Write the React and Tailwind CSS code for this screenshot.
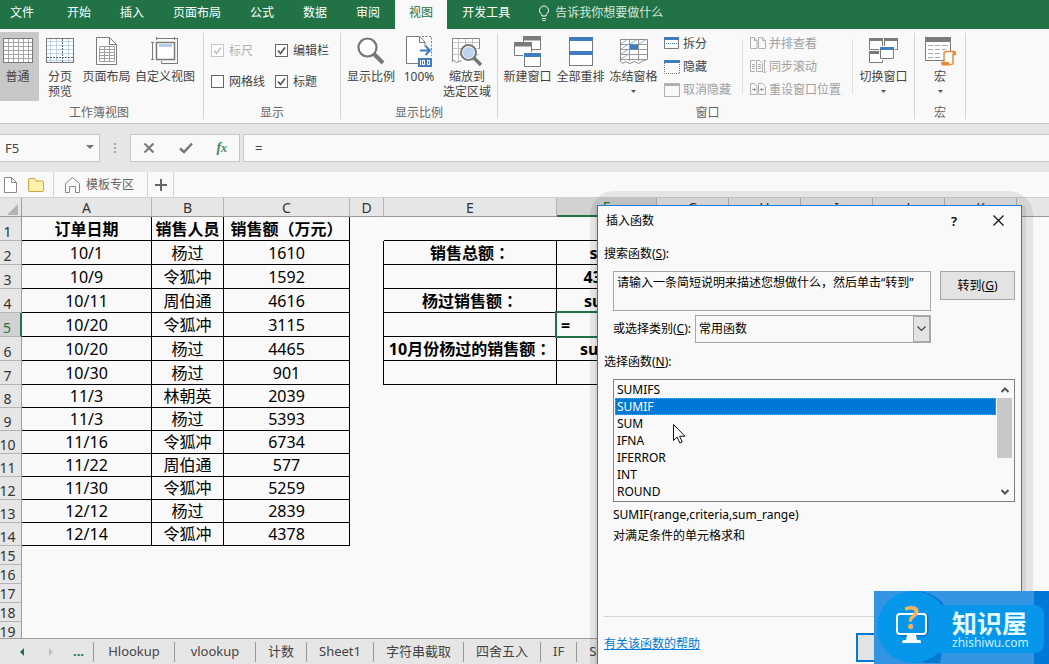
import { useState } from 'react';
import clsx from 'clsx';

const tabs = ['开始', '插入', '页面布局', '公式', '数据', '审阅', '视图', '开发工具'];

const orders = [
  ['10/1', '杨过', '1610'],
  ['10/9', '令狐冲', '1592'],
  ['10/11', '周伯通', '4616'],
  ['10/20', '令狐冲', '3115'],
  ['10/20', '杨过', '4465'],
  ['10/30', '杨过', '901'],
  ['11/3', '林朝英', '2039'],
  ['11/3', '杨过', '5393'],
  ['11/16', '令狐冲', '6734'],
  ['11/22', '周伯通', '577'],
  ['11/30', '令狐冲', '5259'],
  ['12/12', '杨过', '2839'],
  ['12/14', '令狐冲', '4378'],
];

// summary block in E:F, keyed by row number
const summary = {
  2: ['销售总额', 'sum'],
  3: ['', '43518'],
  4: ['杨过销售额', 'sumif'],
  5: ['', '='],
  6: ['10月份杨过的销售额', 'sumifs'],
  7: ['', ''],
};

const columns = ['A', 'B', 'C', 'D', 'E', 'F', 'G', 'H', 'I', 'J', 'K', 'L'];
const functions = ['SUMIFS', 'SUMIF', 'SUM', 'IFNA', 'IFERROR', 'INT', 'ROUND'];
const sheets = ['Hlookup', 'vlookup', '计数', 'Sheet1', '字符串截取', '四舍五入', 'IF', 'Sheet2'];

/* ---------- icons ---------- */

const GridIcon = () => (
  <svg width="30" height="26" viewBox="0 0 30 26" fill="none">
    <rect x=".5" y=".5" width="29" height="24" fill="#fff" stroke="#7a7a7a" />
    <path d="M5.5 1v23M10.5 1v23M15.5 1v23M20.5 1v23M25.5 1v23M1 4.5h28M1 8.5h28M1 12.5h28M1 16.5h28M1 20.5h28" stroke="#a6a6a6" />
  </svg>
);

const PageBreakIcon = () => (
  <svg width="28" height="26" viewBox="0 0 28 26" fill="none">
    <rect x=".5" y=".5" width="27" height="24" fill="#fff" stroke="#7a7a7a" />
    <path d="M4.500 1v23M10.500 1v23M22.500 1v23M1 3.500h26M1 7.500h26M1 11.500h26M1 15.500h26M1 22.500h26" stroke="#b9d3ee" />
    <path d="M16.500 1v23M1 19.500h26" stroke="#5a6b7c" strokeDasharray="2 1" />
  </svg>
);

const PageLayoutIcon = () => (
  <svg width="22" height="28" viewBox="0 0 22 28" fill="none">
    <path d="M.5.5h13l7 7v20H.5z" fill="#fff" stroke="#7a7a7a" />
    <path d="M13.500.5v7h7" stroke="#7a7a7a" />
    <path d="M3.500 9.500h15v15h-15zM3.500 12.500h15M3.500 15.500h15M3.500 18.500h15M3.500 21.500h15M8.500 9.500v15M13.500 9.500v15" stroke="#a0a0a0" />
  </svg>
);

const CustomViewIcon = () => (
  <svg width="28" height="28" viewBox="0 0 28 28" fill="none" stroke="#7a7a7a">
    <path d="M5.500 1.500h18M5.500 0v3M23.500 0v3M1.500 5.500v17M0 5.500h3M0 22.500h3M24 1.500h2.500v25h-16V24" />
    <rect x="5.500" y="5.500" width="18" height="17" fill="#fff" strokeWidth="1.500" />
    <rect x="8" y="7" width="13" height="3" fill="#b5cdea" stroke="none" />
  </svg>
);

const MagnifierIcon = () => (
  <svg width="28" height="28" viewBox="0 0 28 28" fill="none" stroke="#777">
    <circle cx="10.500" cy="10.500" r="9" fill="#fff" strokeWidth="2.200" />
    <path d="M17 17l9 9" strokeWidth="4" />
  </svg>
);

const HundredIcon = () => (
  <svg width="27" height="31" viewBox="0 0 27 31" fill="none">
    <path d="M12 27.500H.5V.5h13l5.500 5.500v5" fill="#fff" stroke="#7a7a7a" />
    <path d="M13.500.5v6H19" stroke="#7a7a7a" />
    <path d="M16 .5h9.500V20" stroke="#7a7a7a" strokeDasharray="2 1.500" />
    <path d="M14 14.500h10M19.500 10l4.500 4.500-4.500 4.500" stroke="#3f7cc0" strokeWidth="2" />
    <path d="M12 22h14v9H12z" fill="#3f7cc0" />
    <path d="M14.500 24v5" stroke="#fff" />
    <rect x="16.500" y="24.500" width="2" height="4" stroke="#fff" />
    <rect x="21.500" y="24.500" width="2" height="4" stroke="#fff" />
  </svg>
);

const ZoomSelectionIcon = () => (
  <svg width="30" height="29" viewBox="0 0 30 29" fill="none">
    <path d="M.5 1.500h27v22l-3 2H.5z" fill="#fff" />
    <path d="M1 5.500h26M1 11.500h26M1 17.500h26M6.500 2v22M13.500 2v22M20.500 2v22" stroke="#c3c3c3" />
    <path d="M.5 25V1.500h27V12M.5 22.500l4 3 5-2" stroke="#888" />
    <circle cx="16.500" cy="15.500" r="7.500" fill="#fafafa" stroke="#777" strokeWidth="2" />
    <circle cx="16.500" cy="15.500" r="5.500" fill="#bcd3ee" />
    <path d="M22 21l7 7" stroke="#777" strokeWidth="3.500" />
  </svg>
);

const NewWindowIcon = () => (
  <svg width="28" height="31" viewBox="0 0 28 31" fill="none" stroke="#7a7a7a">
    <path d="M9.500.5h17v13h-17z" fill="#fff" />
    <path d="M9 2.500h18" strokeWidth="4" />
    <path d="M.5 6.500h17v13H.5z" fill="#fff" />
    <path d="M0 8.500h18" strokeWidth="4" />
    <path d="M9 16h20v15H9z" fill="#fff" stroke="none" />
    <path d="M10.500 17.500h16v13h-16z" />
    <path d="M10 19h17" stroke="#3f7cc0" strokeWidth="4" />
  </svg>
);

const ArrangeIcon = () => (
  <svg width="24" height="29" viewBox="0 0 24 29" fill="none">
    <rect x=".5" y=".5" width="23" height="28" fill="#fff" stroke="#7a7a7a" />
    <path d="M0 2h24M0 16h24" stroke="#3f7cc0" strokeWidth="4" />
  </svg>
);

const FreezeIcon = () => (
  <svg width="28" height="27" viewBox="0 0 28 27" fill="none">
    <path d="M.5 24V1.500h27v20l-4 1-5 3-4-2-5 2-4-2-3 2-2-2" fill="#fff" stroke="#888" />
    <path d="M1 6.500h26M1 11.500h26M1 16.500h26M1 21.500h26M9.500 2v21M18.500 2v21" stroke="#999" />
    <path d="M1 6l7-5M10 6l8-5M19 6l8-5M1 11l8-5M1 16l8-5M1 21l8-5" stroke="#8db4e2" />
    <path d="M10 6.500h8v5h-8z" fill="#3f7cc0" />
  </svg>
);

const SwitchIcon = () => (
  <svg width="30" height="26" viewBox="0 0 30 26" fill="none" stroke="#7a7a7a">
    <path d="M.5.5h13v11H.5zM15.500.5h13v11h-13z" fill="#fff" />
    <path d="M0 1.500h14M15 1.500h14" strokeWidth="3" />
    <path d="M.5 13.500h13v11H.5z" fill="#fff" />
    <path d="M0 14.500h14" strokeWidth="3" />
    <path d="M10 8h16v14H10z" fill="#fff" stroke="none" />
    <path d="M11.500 9.500h13v11h-13z" />
    <path d="M11 10.500h14" stroke="#3f7cc0" strokeWidth="3" />
  </svg>
);

const MacroIcon = () => (
  <svg width="31" height="29" viewBox="0 0 31 29" fill="none">
    <rect x=".5" y=".5" width="25" height="23" fill="#fff" stroke="#7a7a7a" />
    <path d="M0 2.500h26" stroke="#7a7a7a" strokeWidth="5" />
    <path d="M3 8.500h5M10 8.500h5M17 8.500h6M3 12.500h5M10 12.500h5M17 12.500h4M3 16.500h5M10 16.500h5M3 20.500h5M10 20.500h5" stroke="#aaa" />
    <path d="M19 25.500v-9q0-2 2-2h8.500v3H28v8q0 2-2 2h-8.500v-2z" fill="#fff" stroke="#ea8b3a" strokeWidth="1.500" />
    <path d="M16 25h8v3.500h-6q-2-1-2-3.500zM27.500 14.500H31V18h-3z" fill="#ea8b3a" />
  </svg>
);

const SplitIcon = () => (
  <svg width="16" height="13" viewBox="0 0 16 13" fill="none">
    <path d="M.5.5h14v11H.5z" fill="#fff" stroke="#7a7a7a" />
    <path d="M0 1.500h15" stroke="#3f7cc0" strokeWidth="3" />
    <path d="M2 6.500h11" stroke="#3f7cc0" strokeDasharray="1 1" />
  </svg>
);

const HideIcon = () => (
  <svg width="16" height="14" viewBox="0 0 16 14" fill="none">
    <path d="M.5 3v10.500h15V3" stroke="#7a7a7a" strokeDasharray="1 1" />
    <path d="M0 1.500h16" stroke="#3f7cc0" strokeWidth="3" />
  </svg>
);

const UnhideIcon = () => (
  <svg width="16" height="14" viewBox="0 0 16 14" fill="none" stroke="#b0b0b0">
    <path d="M.5.5h15v13H.5z" />
    <path d="M0 1.500h16" strokeWidth="3" />
  </svg>
);

const SideBySideIcon = () => (
  <svg width="16" height="13" viewBox="0 0 16 13" fill="none" stroke="#b0b0b0">
    <path d="M.5.500h4l2.500 3v8H.5zM8.500.500h4l3 3v8h-7zM4.500.500v3H7M12.500.500v3h3" />
  </svg>
);

const SyncScrollIcon = () => (
  <svg width="17" height="15" viewBox="0 0 17 15" fill="none" stroke="#b0b0b0">
    <path d="M5 1.500H.5v11H5M6.500 1.500h3l3 3v8h-6z" />
    <path d="M2 5.500h3M2 7.500h3M2 9.500h3M8 5.500h3M8 7.500h3M8 9.500h3" />
    <path d="M14.500 1v13M13 2.500L14.500 1 16 2.500M13 12.500l1.500 1.500 1.500-1.500" />
  </svg>
);

const ResetPosIcon = () => (
  <svg width="16" height="13" viewBox="0 0 16 13" fill="none" stroke="#b0b0b0">
    <path d="M.5.500h4l2.500 3v8H.5zM8.500.500h4l3 3v8h-7z" />
    <path d="M2 6.500h4M4.500 5v3M9.500 6.500H14M11.500 5v3" stroke="#999" />
  </svg>
);

const Watermark = () => (
  <div className="absolute right-0 bottom-0 z-30 h-[73px] w-[175px] overflow-hidden bg-[#3394e4] font-['Noto_Sans','Noto_Sans_CJK_SC',sans-serif]">
    <svg className="absolute inset-0" width="175" height="73" viewBox="0 0 175 73" fill="none">
      <path d="M160 0h15v73h-15z" fill="#0078d7" />
      <circle cx="42" cy="36" r="36" fill="#0578d4" />
      <path d="M64 12l10 8-8 52H50z" fill="#0578d4" />
      <circle cx="39" cy="36" r="36" fill="#0696ea" />
      <rect x="44" y="14" width="126" height="48" rx="9" fill="#0696ea" />
      <rect x="24" y="24" width="29" height="20" rx="3" fill="#0696ea" stroke="#0f73c8" strokeWidth="3" />
      <rect x="23" y="23" width="29" height="20" rx="3" fill="#0696ea" stroke="#f3fbff" strokeWidth="2" />
      <path d="M33 44h9l1 5h3q1 0 1 3H28q0-3 2-3h2z" fill="#f3fbff" />
    </svg>
    <span className="absolute top-2 left-[30px] text-[32px] leading-9 font-semibold text-[#f7b15a]">?</span>
    <span className="absolute top-[17px] left-[78px] text-[25px] leading-[30px] font-bold text-[#e2fbff]">知识屋</span>
    <span className="absolute top-11 left-[78px] text-[12px] leading-4 text-[#c4f0ff]">zhishiwu.com</span>
  </div>
);

/* ---------- ribbon ---------- */

const Caret = ({ className }) => (
  <svg className={className} width="5" height="3" viewBox="0 0 5 3">
    <path d="M0 0h5L2.500 3z" fill="#555" />
  </svg>
);

const BigButton = ({ icon, lines, width, active, caret }) => (
  <button className={clsx('flex h-[69px] flex-col items-center pt-1 leading-[15px]', width, active && 'bg-[#c8c8c8]')}>
    <span className="mb-[3px] flex h-[30px] items-center">{icon}</span>
    {lines.map((line) => (
      <span key={line} className="whitespace-nowrap">{line}</span>
    ))}
    {caret && <Caret className="mt-[6px]" />}
  </button>
);

const SmallButton = ({ icon, label, disabled }) => (
  <button disabled={disabled} className="flex h-[23px] items-center gap-[3px] whitespace-nowrap disabled:text-[#a0a0a0]">
    <span className="w-4">{icon}</span>
    {label}
  </button>
);

const Group = ({ title, className, children }) => (
  <section className={clsx('flex shrink-0 flex-col pt-[3px]', className)}>
    <div className="flex h-[73px]">{children}</div>
    <h2 className="text-center leading-[15px] text-[#666]">{title}</h2>
  </section>
);

const Divider = () => <div className="my-1 w-px shrink-0 bg-[#d4d4d4]" />;
const InnerDivider = () => <div className="mt-[7px] h-[55px] w-px bg-[#e0e0e0]" />;

const Check = ({ label, defaultChecked, disabled }) => (
  <label className={clsx('flex h-[31px] items-center gap-[5px] whitespace-nowrap', disabled && 'text-[#b0b0b0]')}>
    <span className="relative h-[13px] w-[13px]">
      <input
        type="checkbox"
        defaultChecked={defaultChecked}
        disabled={disabled}
        className="peer block h-[13px] w-[13px] appearance-none border border-[#666] bg-white disabled:border-[#c8c8c8]"
      />
      <svg className="pointer-events-none absolute inset-0 hidden text-[#555] peer-checked:block peer-disabled:text-[#c0c0c0]" width="13" height="13" viewBox="0 0 13 13" fill="none">
        <path d="M3 6.500L5.500 9.500 10 3.500" stroke="currentColor" strokeWidth="1.700" />
      </svg>
    </span>
    {label}
  </label>
);

const Ribbon = () => (
  <div className="flex h-[95px] shrink-0 overflow-hidden border-b border-[#c8c8c8] bg-[#f9f9f9] text-[12px] text-[#444]">
    <Group title="工作簿视图" className="mr-[5px]">
      <BigButton icon={<GridIcon />} lines={['普通']} width="w-[39px] pr-1" active />
      <BigButton icon={<PageBreakIcon />} lines={['分页', '预览']} width="w-[42px]" />
      <BigButton icon={<PageLayoutIcon />} lines={['页面布局']} width="w-[51px]" />
      <BigButton icon={<CustomViewIcon />} lines={['自定义视图']} width="w-[66px]" />
    </Group>
    <Divider />
    <Group title="显示" className="w-[136px]">
      <div className="grid h-[62px] grid-cols-[64px_auto] pt-[3px] pl-[7px]">
        <Check label="标尺" defaultChecked disabled />
        <Check label="编辑栏" defaultChecked />
        <Check label="网格线" />
        <Check label="标题" defaultChecked />
      </div>
    </Group>
    <Divider />
    <Group title="显示比例" className="px-[5px]">
      <BigButton icon={<MagnifierIcon />} lines={['显示比例']} width="w-[50px]" />
      <BigButton icon={<HundredIcon />} lines={['100%']} width="w-[46px]" />
      <BigButton icon={<ZoomSelectionIcon />} lines={['缩放到', '选定区域']} width="w-[50px]" />
    </Group>
    <Divider />
    <Group title="窗口" className="pl-[3px]">
      <BigButton icon={<NewWindowIcon />} lines={['新建窗口']} width="w-[53px]" />
      <BigButton icon={<ArrangeIcon />} lines={['全部重排']} width="w-[53px]" />
      <BigButton icon={<FreezeIcon />} lines={['冻结窗格']} width="w-[53px]" caret />
      <div className="w-[82px] pl-1">
        <SmallButton icon={<SplitIcon />} label="拆分" />
        <SmallButton icon={<HideIcon />} label="隐藏" />
        <SmallButton icon={<UnhideIcon />} label="取消隐藏" disabled />
      </div>
      <InnerDivider />
      <div className="w-[109px] pl-[7px]">
        <SmallButton icon={<SideBySideIcon />} label="并排查看" disabled />
        <SmallButton icon={<SyncScrollIcon />} label="同步滚动" disabled />
        <SmallButton icon={<ResetPosIcon />} label="重设窗口位置" disabled />
      </div>
      <InnerDivider />
      <BigButton icon={<SwitchIcon />} lines={['切换窗口']} width="w-[61px]" caret />
    </Group>
    <Divider />
    <Group title="宏">
      <BigButton icon={<MacroIcon />} lines={['宏']} width="w-[50px]" caret />
    </Group>
    <Divider />
  </div>
);

const TabBar = ({ active, onSelect }) => (
  <nav className="flex h-[29px] shrink-0 gap-px bg-[#217346] text-[12px] whitespace-nowrap text-white">
    <button className="mr-2 px-[10px] pb-1">文件</button>
    {tabs.map((tab) => (
      <button
        key={tab}
        onClick={() => onSelect(tab)}
        className={clsx('px-[14px] pb-1', tab === active && 'bg-[#f9f9f9] text-[#217346]')}
      >
        {tab}
      </button>
    ))}
    <button className="ml-[13px] flex items-center gap-[5px] pb-[3px] text-[#d6e8dd]">
      <svg width="12" height="16" viewBox="0 0 12 16" fill="none" stroke="#fff">
        <path d="M4 11c0-2-2.500-3-2.500-5.500a4.500 4.500 0 019 0C10.500 8 8 9 8 11zM4 13.500h4M4.500 15.500h3" />
      </svg>
      告诉我你想要做什么
    </button>
  </nav>
);

const FormulaBar = () => (
  <div className="flex h-12 shrink-0 items-center bg-[#e6e6e6] text-[13px] text-[#444]">
    <div className="relative">
      <input aria-label="名称框" defaultValue="F5" className="block h-7 w-[100px] border border-l-0 border-[#c6c6c6] bg-[#f9f9f9] pl-[5px]" />
      <svg className="absolute top-[11px] right-[6px]" width="8" height="4" viewBox="0 0 8 4">
        <path d="M0 0h8L4 4z" fill="#777" />
      </svg>
    </div>
    <svg className="mx-[14px]" width="2" height="10" viewBox="0 0 2 10" fill="#a6a6a6">
      <path d="M0 0h2v2H0zM0 4h2v2H0zM0 8h2v2H0z" />
    </svg>
    <div className="flex h-7 w-[110px] items-center justify-around border border-[#c6c6c6] bg-[#f9f9f9]">
      <button aria-label="取消">
        <svg width="12" height="10" viewBox="0 0 12 10" fill="none" stroke="#777" strokeWidth="2">
          <path d="M1.500.500l9 9M10.500.500l-9 9" />
        </svg>
      </button>
      <button aria-label="输入">
        <svg width="14" height="12" viewBox="0 0 14 12" fill="none" stroke="#777" strokeWidth="2.500">
          <path d="M1 6.500l4 3.500 8-8.500" />
        </svg>
      </button>
      <button aria-label="插入函数" className="font-['Liberation_Serif',serif] text-[14px] leading-4 font-bold text-[#3f8a62] italic">
        f<span className="text-[12px]">x</span>
      </button>
    </div>
    <input aria-label="编辑栏" defaultValue="=" className="ml-[3px] h-7 min-w-0 flex-1 border border-r-0 border-[#c6c6c6] bg-[#f9f9f9] pl-[11px]" />
  </div>
);

const DocBar = () => (
  <div className="flex h-[26px] shrink-0 items-center border-b border-[#d0d0d0] bg-[#f9f9f9] text-[12px] text-[#666]">
    <div className="flex h-full w-[54px] items-center gap-[11px] border-r border-[#d4d4d4] pl-1">
      <button aria-label="新建">
        <svg width="13" height="16" viewBox="0 0 13 16" fill="#fff" stroke="#888">
          <path d="M.5.500h7l5 5v10H.5zM7.500.500v5h5" />
        </svg>
      </button>
      <button aria-label="打开">
        <svg width="16" height="14" viewBox="0 0 16 14" fill="#fff3ab" stroke="#cfa045">
          <path d="M.5 2q0-1.500 1.500-1.500h4q1 0 1.500 1.500l.5 1h6q1.500 0 1.500 1.500V12q0 1.500-1.500 1.500H2Q.5 13.500.5 12z" />
        </svg>
      </button>
    </div>
    <button className="flex h-full w-[94px] items-center gap-[6px] border-r border-[#d4d4d4] pl-[11px] whitespace-nowrap">
      <svg width="15" height="16" viewBox="0 0 15 16" fill="none" stroke="#888">
        <path d="M.5 15.500v-9l7-6 7 6v9h-4v-6h-6v6z" />
      </svg>
      模板专区
    </button>
    <button aria-label="新标签" className="flex h-full w-[26px] items-center justify-center border-r border-[#d4d4d4]">
      <svg width="12" height="12" viewBox="0 0 12 12" stroke="#666" strokeWidth="2">
        <path d="M6 0v12M0 6h12" />
      </svg>
    </button>
  </div>
);

/* ---------- sheet ---------- */

const Sheet = () => {
  const rows = Array.from({ length: 19 }, (_, i) => i + 1);
  const cell = 'border-r border-b border-black';

  return (
    <div className="min-h-0 flex-1 overflow-hidden bg-[#f9f9f9]">
      <table className="w-full min-w-[1089px] table-fixed border-separate border-spacing-0 text-center text-[16px] leading-[18px] whitespace-nowrap text-black">
        <colgroup>
          <col className="w-[22px]" />
          <col className="w-[130px]" />
          <col className="w-[72px]" />
          <col className="w-[126px]" />
          <col className="w-[34px]" />
          <col className="w-[173px]" />
          <col className="w-[100px]" />
          <col className="w-[72px]" />
          <col className="w-[72px]" />
          <col className="w-[72px]" />
          <col className="w-[72px]" />
          <col className="w-[72px]" />
          <col />
        </colgroup>
        <thead>
          <tr className="h-[19px] bg-[#e6e6e6] text-[14px] leading-4 text-[#333]">
            <th className="border-r border-b border-[#9c9c9c] p-0">
              <svg className="mt-1 ml-[7px] block" width="11" height="11" viewBox="0 0 11 11">
                <path d="M11 0v11H0z" fill="#b2b2b2" />
              </svg>
            </th>
            {columns.map((name) => (
              <th
                key={name}
                className={clsx(
                  'border-r p-0 font-normal',
                  name === 'F' ? 'border-b-2 border-r-[#b5b5b5] border-b-[#217346] bg-[#d2d2d2] text-[#217346]' : 'border-b border-r-[#b5b5b5] border-b-[#9c9c9c] pt-[2px]'
                )}
              >
                {name}
              </th>
            ))}
          </tr>
        </thead>
        <tbody>
          {rows.map((n) => {
            const order = orders[n - 2];
            const sum = summary[n];
            return (
              <tr key={n} className={n < 8 ? 'h-6' : n < 15 ? 'h-[23px]' : 'h-[19px]'}>
                <th
                  className={clsx(
                    'border-b border-b-[#b5b5b5] p-0 pr-[6px] align-bottom text-[14px] leading-[16px] font-normal',
                    n === 5 ? 'border-r-2 border-r-[#217346] bg-[#d2d2d2] text-[#217346]' : 'border-r border-r-[#9c9c9c] bg-[#e6e6e6] text-[#333]'
                  )}
                >
                  <span className="flex justify-center">{n}</span>
                </th>
                {n === 1 &&
                  ['订单日期', '销售人员', '销售额（万元）'].map((h) => (
                    <th key={h} className={clsx(cell, 'p-0 font-bold')}>{h}</th>
                  ))}
                {order && order.map((v, i) => <td key={i} className={clsx(cell, 'p-0')}>{v}</td>)}
                {n > 14 && <td colSpan={3} />}
                <td className={clsx('p-0', sum && 'border-r border-black')} />
                <td className={clsx('p-0 font-bold', sum && cell, n === 1 && 'border-b border-black')}>
                  {sum?.[0] && (
                    <>
                      {sum[0]}
                      <span className="font-['Noto_Sans_CJK_TC',sans-serif]">：</span>
                    </>
                  )}
                </td>
                <td className={clsx('relative p-0 font-bold', sum && cell, n === 1 && 'border-b border-black', n === 5 && 'pl-1 text-left')}>
                  {sum?.[1]}
                  {n === 5 && <span className="absolute -top-[2px] -right-[2px] -bottom-[2px] -left-[2px] border-2 border-[#217346]" />}
                </td>
                <td colSpan={6} className="p-0" />
              </tr>
            );
          })}
        </tbody>
      </table>
    </div>
  );
};

const SheetTabs = () => (
  <footer className="flex h-[26px] shrink-0 items-center overflow-hidden border-t border-[#9c9c9c] bg-[#e6e6e6] text-[13px] whitespace-nowrap text-[#444]">
    <div className="flex w-[93px] shrink-0 items-center pl-5">
      <button aria-label="上一个">
        <svg width="4" height="8" viewBox="0 0 4 8"><path d="M4 0v8L0 4z" fill="#217346" /></svg>
      </button>
      <button aria-label="下一个" className="ml-[25px]">
        <svg width="4" height="8" viewBox="0 0 4 8"><path d="M0 0v8l4-4z" fill="#bdbdbd" /></svg>
      </button>
      <button className="ml-5 font-bold text-[#217346]">...</button>
    </div>
    {sheets.map((name) => (
      <button key={name} className={clsx('h-5 shrink-0 border-l border-[#999] px-3 pb-[2px] leading-[18px]', name.endsWith('lookup') && 'min-w-[81px]')}>{name}</button>
    ))}
  </footer>
);

/* ---------- dialog ---------- */

const Chevron = ({ up }) => (
  <svg width="8" height="6" viewBox="0 0 8 6" fill="none" stroke="#555" strokeWidth="2">
    <path d={up ? 'M.5 5L4 1.500 7.500 5' : 'M.5 1L4 4.500 7.500 1'} />
  </svg>
);

const InsertFunctionDialog = () => {
  const [selected, setSelected] = useState('SUMIF');

  return (
    <div className="absolute top-[191px] right-4 bottom-0 z-20 flex w-[443px] rounded-t-[24px] bg-black/8 pt-[14px] pr-[11px] pl-[7px]">
      <div
        role="dialog"
        aria-labelledby="dialog-title"
        className="flex-1 border border-b-0 border-[#1a7fd4] bg-[#f9f9f9] px-[6px] text-[12px] leading-4 text-black shadow-[1px_4px_0_3px_rgba(0,0,0,0.07)]"
      >
        <div className="flex h-[29px] items-center">
          <h1 id="dialog-title" className="flex-1 pl-[2px]">插入函数</h1>
          <button aria-label="帮助" className="mr-[36px] text-[13px] font-semibold">?</button>
          <button aria-label="关闭" className="mr-[11px]">
            <svg width="11" height="11" viewBox="0 0 11 11" stroke="#111" strokeWidth="1.200">
              <path d="M.5.500l10 10M10.500.500l-10 10" />
            </svg>
          </button>
        </div>

        <label htmlFor="search" className="mt-[11px] block">搜索函数(<u>S</u>):</label>
        <div className="mt-[9px] flex items-start gap-[9px] pl-[9px]">
          <textarea
            id="search"
            className="h-10 min-w-0 flex-1 resize-none overflow-hidden border border-[#a5a8b0] bg-[#f9f9f9] px-[3px] py-[3px]"
            defaultValue="请输入一条简短说明来描述您想做什么，然后单击“转到”"
          />
          <button className="h-[29px] w-[75px] border border-[#a8a8a8] bg-[#e3e3e3]">转到(<u>G</u>)</button>
        </div>

        <div className="mt-1 flex items-center pr-[84px] pl-[9px]">
          <label htmlFor="category" className="w-[82px] whitespace-nowrap">或选择类别(<u>C</u>):</label>
          <div className="relative flex-1">
            <select id="category" className="block h-7 w-full appearance-none border border-[#a5a8b0] bg-[#f9f9f9] pl-[3px]">
              <option>常用函数</option>
            </select>
            <span className="pointer-events-none absolute top-px right-px bottom-px flex w-[17px] items-center justify-center border border-[#a8a8a8] bg-[#e3e3e3]">
              <svg width="9" height="6" viewBox="0 0 9 6" fill="none" stroke="#444" strokeWidth="1.200">
                <path d="M.5.500l4 4 4-4" />
              </svg>
            </span>
          </div>
        </div>

        <p id="list-label" className="mt-[11px]">选择函数(<u>N</u>):</p>
        <div className="mt-[9px] ml-[9px] flex h-[123px] border border-[#80838f] p-px">
          <ul role="listbox" aria-labelledby="list-label" className="flex-1 leading-[17px]">
            {functions.map((fn) => (
              <li
                key={fn}
                role="option"
                aria-selected={fn === selected}
                onClick={() => setSelected(fn)}
                className={clsx('h-[17px] pl-[2px]', fn === selected && 'bg-[#0078d7] text-white outline -outline-offset-1 outline-dotted outline-[#d98b3c]')}
              >
                {fn}
              </li>
            ))}
          </ul>
          <div className="flex w-[17px] flex-col items-center">
            <button aria-label="向上滚动" className="flex h-[17px] items-center"><Chevron up /></button>
            <div className="h-[60px] w-[15px] bg-[#c8c8c8]" />
            <button aria-label="向下滚动" className="mt-auto flex h-[17px] items-center"><Chevron /></button>
          </div>
        </div>

        <p className="mt-[5px] ml-[9px]">SUMIF(range,criteria,sum_range)</p>
        <p className="mt-[5px] ml-[9px]">对满足条件的单元格求和</p>

        <div className="mt-[72px] flex items-start border-t border-[#d4d4d4] pt-4">
          <a href="#help" className="mt-[3px] flex-1 text-[#0078d7] underline">有关该函数的帮助</a>
          <button aria-label="确定" className="mr-[9px] h-[29px] w-[75px] border-2 border-[#0078d7] bg-[#e3e3e3]" />
          <button aria-label="取消" className="h-[29px] w-[75px] border border-[#a8a8a8] bg-[#e3e3e3]" />
        </div>
      </div>

      <svg className="pointer-events-none absolute top-[233px] left-[83px]" width="13" height="20" viewBox="0 0 13 20">
        <path d="M.5.500v16l3.700-3.500 2.600 6 2.400-1-2.600-5.800H12z" fill="#fff" stroke="#111" />
      </svg>
    </div>
  );
};

export default function App() {
  const [tab, setTab] = useState('视图');

  return (
    <div className="relative flex h-screen flex-col overflow-hidden bg-[#f9f9f9] font-['Noto_Sans','Noto_Sans_CJK_SC',sans-serif]">
      <TabBar active={tab} onSelect={setTab} />
      <Ribbon />
      <FormulaBar />
      <DocBar />
      <Sheet />
      <SheetTabs />
      <InsertFunctionDialog />
      <Watermark />
    </div>
  );
}
